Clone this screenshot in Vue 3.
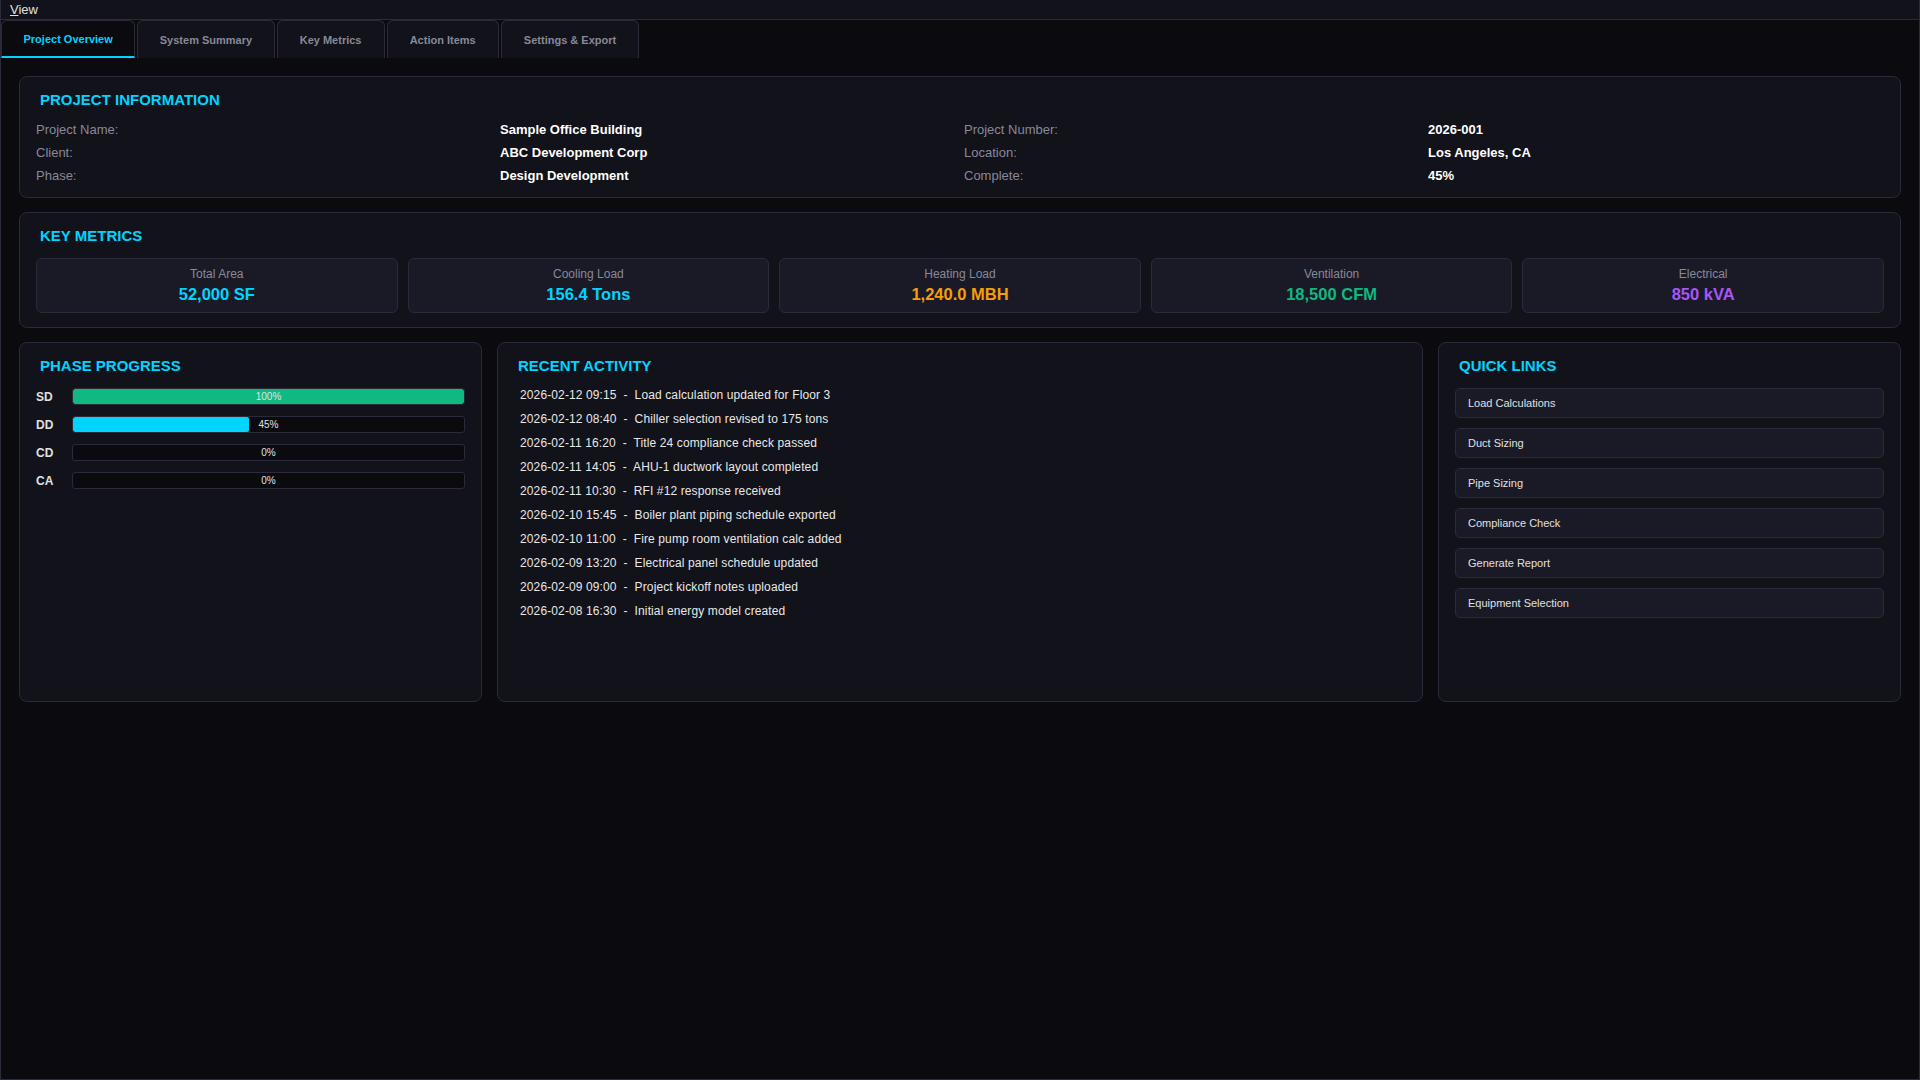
<script setup>
const tabs = ['Project Overview', 'System Summary', 'Key Metrics', 'Action Items', 'Settings & Export']
const info = [
  ['Project Name:', 'Sample Office Building', 'Project Number:', '2026-001'],
  ['Client:', 'ABC Development Corp', 'Location:', 'Los Angeles, CA'],
  ['Phase:', 'Design Development', 'Complete:', '45%'],
]
const metrics = [
  { label: 'Total Area', value: '52,000 SF', cls: 'cyan' },
  { label: 'Cooling Load', value: '156.4 Tons', cls: 'cyan' },
  { label: 'Heating Load', value: '1,240.0 MBH', cls: 'orange' },
  { label: 'Ventilation', value: '18,500 CFM', cls: 'green' },
  { label: 'Electrical', value: '850 kVA', cls: 'purple' },
]
const phases = [
  { name: 'SD', pct: 100, cls: 'fill-green' },
  { name: 'DD', pct: 45, cls: 'fill-cyan' },
  { name: 'CD', pct: 0, cls: '' },
  { name: 'CA', pct: 0, cls: '' },
]
const activity = [
  '2026-02-12 09:15  -  Load calculation updated for Floor 3',
  '2026-02-12 08:40  -  Chiller selection revised to 175 tons',
  '2026-02-11 16:20  -  Title 24 compliance check passed',
  '2026-02-11 14:05  -  AHU-1 ductwork layout completed',
  '2026-02-11 10:30  -  RFI #12 response received',
  '2026-02-10 15:45  -  Boiler plant piping schedule exported',
  '2026-02-10 11:00  -  Fire pump room ventilation calc added',
  '2026-02-09 13:20  -  Electrical panel schedule updated',
  '2026-02-09 09:00  -  Project kickoff notes uploaded',
  '2026-02-08 16:30  -  Initial energy model created',
]
const links = ['Load Calculations', 'Duct Sizing', 'Pipe Sizing', 'Compliance Check', 'Generate Report', 'Equipment Selection']
</script>

<template>
  <div class="window">
    <div class="menubar"><span class="menu"><u>V</u>iew</span></div>
    <div class="tabbar">
      <div v-for="(t, i) in tabs" :key="t" class="tab" :class="{ active: i === 0 }">{{ t }}</div>
    </div>
    <div class="content">
      <section class="card info-card">
        <h2>PROJECT INFORMATION</h2>
        <div class="info-grid">
          <template v-for="row in info" :key="row[0]">
            <span class="lbl">{{ row[0] }}</span>
            <span class="val">{{ row[1] }}</span>
            <span class="lbl">{{ row[2] }}</span>
            <span class="val">{{ row[3] }}</span>
          </template>
        </div>
      </section>

      <section class="card metrics-card">
        <h2>KEY METRICS</h2>
        <div class="metrics">
          <div v-for="m in metrics" :key="m.label" class="metric">
            <div class="m-label">{{ m.label }}</div>
            <div class="m-value" :class="m.cls">{{ m.value }}</div>
          </div>
        </div>
      </section>

      <div class="row3">
        <section class="card pane">
          <h2>PHASE PROGRESS</h2>
          <div class="phases">
            <div v-for="p in phases" :key="p.name" class="phase">
              <span class="p-name">{{ p.name }}</span>
              <div class="bar">
                <div class="fill" :class="p.cls" :style="{ width: p.pct + '%' }"></div>
                <span class="pct">{{ p.pct }}%</span>
              </div>
            </div>
          </div>
        </section>

        <section class="card pane">
          <h2>RECENT ACTIVITY</h2>
          <div class="activity">
            <div v-for="a in activity" :key="a" class="act">{{ a }}</div>
          </div>
        </section>

        <section class="card pane">
          <h2>QUICK LINKS</h2>
          <div class="links">
            <div v-for="l in links" :key="l" class="link">{{ l }}</div>
          </div>
        </section>
      </div>
    </div>
  </div>
</template>

<style>
html, body { margin: 0; background: #0a0a0f; }
</style>

<style scoped>
.window {
  width: 1920px;
  height: 1080px;
  box-sizing: border-box;
  background: #0a0a0f;
  font-family: "Liberation Sans", Arial, sans-serif;
  color: #e0e0e0;
  border-left: 1px solid #2a2a3a;
  border-bottom: 1px solid #2a2a3a;
  border-right: 1px solid #2a2a3a;
  overflow: hidden;
}
.menubar {
  height: 19px;
  background: #12121a;
  border-bottom: 1px solid #2a2a3a;
  padding-left: 9px;
  font-size: 13px;
  line-height: 19px;
}
.menu { color: #e0e0e0; }
.tabbar {
  display: flex;
  height: 38px;
  gap: 2px;
}
.tab {
  box-sizing: border-box;
  height: 38px;
  padding: 0 21.5px;
  font-size: 11px;
  font-weight: 700;
  line-height: 39px;
  color: #888899;
  background: #12121a;
  border: 1px solid #2a2a3a;
  border-bottom: none;
  border-radius: 6px 6px 0 0;
  white-space: nowrap;
}
.tab:nth-child(n+3) { padding: 0 22.1px; }
.tab.active {
  color: #00d4ff;
  background: #0a0a0f;
  line-height: 36px;
  border-bottom: 2px solid #00d4ff;
}
.content {
  padding: 18px 18px 0 18px;
  display: flex;
  flex-direction: column;
  gap: 14px;
}
.card {
  box-sizing: border-box;
  background: #12121a;
  border: 1px solid #2a2a3a;
  border-radius: 8px;
  padding: 0 16px;
}
h2 {
  margin: 0;
  padding-left: 4px;
  font-size: 15px;
  font-weight: 700;
  line-height: 18px;
  color: #00d4ff;
}
.info-card { height: 122px; padding-top: 14px; }
.info-grid {
  display: grid;
  grid-template-columns: repeat(4, 456px);
  column-gap: 8px;
  grid-auto-rows: 23px;
  margin-top: 9px;
  font-size: 13px;
  line-height: 23px;
}
.lbl { color: #888899; }
.val { color: #ffffff; font-weight: 700; }
.metrics-card { height: 116px; padding-top: 14px; }
.metrics {
  display: flex;
  gap: 10px;
  margin-top: 13px;
}
.metric {
  flex: 1 1 0;
  box-sizing: border-box;
  height: 55px;
  background: #1a1a26;
  border: 1px solid #2a2a3a;
  border-radius: 6px;
  text-align: center;
  padding-top: 7px;
}
.m-label { font-size: 12px; line-height: 16px; color: #888899; }
.m-value { font-size: 16.5px; font-weight: 700; line-height: 21px; margin-top: 2px; }
.cyan { color: #00d4ff; }
.orange { color: #f59e0b; }
.green { color: #10b981; }
.purple { color: #a855f7; }
.row3 {
  display: grid;
  grid-template-columns: 1fr 2fr 1fr;
  gap: 15px;
  height: 360px;
}
.pane { min-width: 0; padding-top: 14px; }
.phases {
  margin-top: 13px;
  display: flex;
  flex-direction: column;
  gap: 11px;
}
.phase { display: flex; align-items: center; height: 17px; }
.p-name { width: 36px; font-size: 12px; font-weight: 700; color: #e0e0e0; }
.bar {
  position: relative;
  flex: 1;
  box-sizing: border-box;
  height: 17px;
  background: #0a0a0f;
  border: 1px solid #2a2a3a;
  border-radius: 3px;
  overflow: hidden;
}
.fill { height: 100%; border-radius: 2px; }
.fill-green { background: #10b981; }
.fill-cyan { background: #00d4ff; }
.pct {
  position: absolute;
  inset: 0;
  text-align: center;
  font-size: 10px;
  line-height: 16px;
  color: #e0e0e0;
}
.activity { margin-top: 8px; padding-left: 6px; }
.act { font-size: 12px; letter-spacing: 0.12px; line-height: 24px; color: #e8e8e8; white-space: pre; }
.links {
  margin-top: 13px;
  display: flex;
  flex-direction: column;
  gap: 10px;
}
.link {
  box-sizing: border-box;
  height: 30px;
  padding-left: 12px;
  font-size: 11px;
  line-height: 28px;
  color: #e0e0e0;
  background: #1a1a26;
  border: 1px solid #2a2a3a;
  border-radius: 5px;
}
</style>
